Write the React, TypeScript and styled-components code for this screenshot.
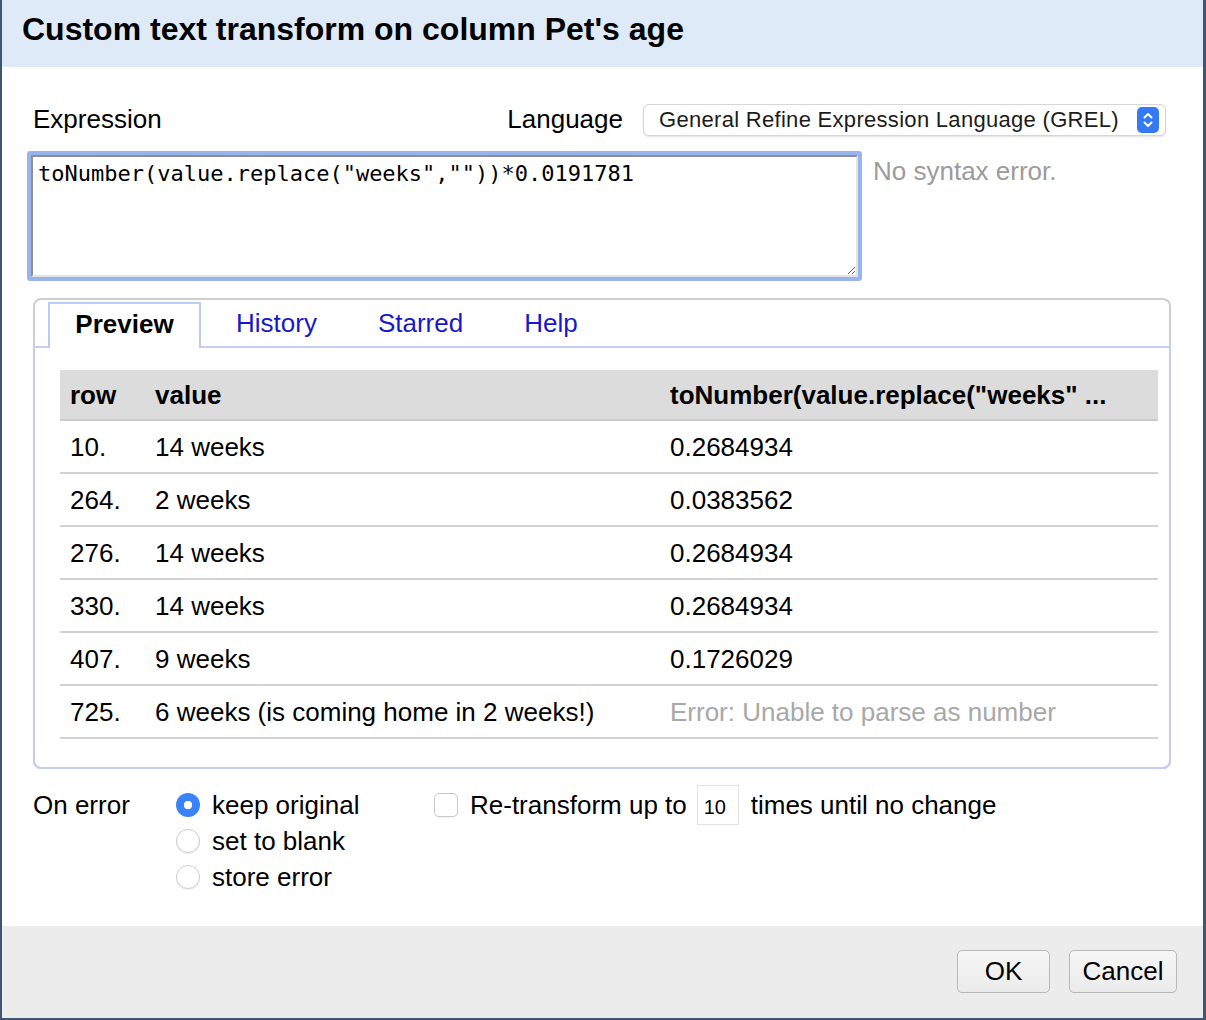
import React from 'react';
import styled, { createGlobalStyle, css } from 'styled-components';

const GlobalStyle = createGlobalStyle`
  html, body {
    margin: 0;
    padding: 0;
    background: #ffffff;
  }
  body {
    font-family: "Liberation Sans", Arial, Helvetica, sans-serif;
    color: #000;
  }
  * {
    box-sizing: border-box;
  }
`;

interface PreviewRow {
  row: string;
  value: string;
  result: string;
  error?: boolean;
}

const rows: PreviewRow[] = [
  { row: '10.', value: '14 weeks', result: '0.2684934' },
  { row: '264.', value: '2 weeks', result: '0.0383562' },
  { row: '276.', value: '14 weeks', result: '0.2684934' },
  { row: '330.', value: '14 weeks', result: '0.2684934' },
  { row: '407.', value: '9 weeks', result: '0.1726029' },
  { row: '725.', value: '6 weeks (is coming home in 2 weeks!)', result: 'Error: Unable to parse as number', error: true },
];

const tabs = ['Preview', 'History', 'Starred', 'Help'];

const onErrorOptions = ['keep original', 'set to blank', 'store error'];

const App = (): JSX.Element => {
  return (
    <>
      <GlobalStyle />
      <Dialog>
        <Header>
          <Title>Custom text transform on column Pet's age</Title>
        </Header>

        <Body>
          <TopRow>
            <Label $grow>Expression</Label>
            <Label $gap={20}>Language</Label>
            <SelectBox>
              <SelectText>General Refine Expression Language (GREL)</SelectText>
              <Stepper>
                <svg width="22" height="26" viewBox="0 0 22 26">
                  <rect x="0" y="0" width="22" height="26" rx="5" fill="#3479f6" />
                  <path d="M7.5 10.5 L11 7 L14.5 10.5" fill="none" stroke="#fff" strokeWidth="2" strokeLinecap="round" strokeLinejoin="round" />
                  <path d="M7.5 15.5 L11 19 L14.5 15.5" fill="none" stroke="#fff" strokeWidth="2" strokeLinecap="round" strokeLinejoin="round" />
                </svg>
              </Stepper>
            </SelectBox>
          </TopRow>

          <EditorRow>
            <ExpressionInput defaultValue={'toNumber(value.replace("weeks",""))*0.0191781'} spellCheck={false} />
            <Status>No syntax error.</Status>
          </EditorRow>

          <TabsPanel>
            <TabList>
              {tabs.map((tab, i) => (
                <Tab key={tab} $active={i === 0}>{tab}</Tab>
              ))}
            </TabList>
            <TabContent>
              <PreviewTable>
                <colgroup>
                  <col style={{ width: 85 }} />
                  <col style={{ width: 515 }} />
                  <col />
                </colgroup>
                <thead>
                  <tr>
                    <Th>row</Th>
                    <Th>value</Th>
                    <Th>toNumber(value.replace("weeks" ...</Th>
                  </tr>
                </thead>
                <tbody>
                  {rows.map((r) => (
                    <tr key={r.row}>
                      <Td>{r.row}</Td>
                      <Td>{r.value}</Td>
                      <Td $muted={r.error}>{r.result}</Td>
                    </tr>
                  ))}
                </tbody>
              </PreviewTable>
            </TabContent>
          </TabsPanel>

          <Options>
            <OptionLabel>On error</OptionLabel>
            <RadioGroup>
              {onErrorOptions.map((opt, i) => (
                <OptionLine key={opt}>
                  <Radio $checked={i === 0} />
                  {opt}
                </OptionLine>
              ))}
            </RadioGroup>
            <OptionLine>
              <Checkbox />
              Re-transform up to
              <Times>10</Times>
              times until no change
            </OptionLine>
          </Options>
        </Body>

        <Footer>
          <Button $width={93}>OK</Button>
          <Button $width={108}>Cancel</Button>
        </Footer>
      </Dialog>
    </>
  );
};

const Dialog = styled.div`
  width: 1206px;
  height: 1020px;
  display: flex;
  flex-direction: column;
  border-left: 2px solid #3f5573;
  border-right: 3px solid #3f5573;
  border-bottom: 2px solid #3f5573;
  background: #fff;
  overflow: hidden;
`;

const Header = styled.div`
  height: 67px;
  flex: 0 0 67px;
  background: #dfeaf9;
  padding: 10px 20px 0;
`;

const Title = styled.h1`
  margin: 0;
  font-size: 32px;
  line-height: 38px;
  font-weight: bold;
`;

const Body = styled.div`
  flex: 1;
  padding: 0 32px 0 31px;
`;

const TopRow = styled.div`
  display: flex;
  align-items: center;
  height: 32px;
  margin-top: 37px;
`;

const Label = styled.div<{ $grow?: boolean; $gap?: number }>`
  font-size: 26px;
  line-height: 30px;
  padding-bottom: 2px;
  ${(p) => p.$grow && css`flex: 1;`}
  margin-right: ${(p) => p.$gap ?? 0}px;
`;

const SelectBox = styled.div`
  width: 523px;
  height: 32px;
  margin-right: 5px;
  display: flex;
  align-items: center;
  justify-content: space-between;
  padding: 0 6px 0 15px;
  border: 1px solid #d6d6d6;
  border-radius: 6px;
  box-shadow: 0 1px 2px rgba(0, 0, 0, 0.12);
  background: #fff;
`;

const SelectText = styled.span`
  font-size: 22px;
  letter-spacing: 0.3px;
  color: #1c1c1c;
  white-space: nowrap;
`;

const Stepper = styled.span`
  display: flex;
  width: 22px;
  height: 26px;
`;

const EditorRow = styled.div`
  display: flex;
  align-items: flex-start;
  margin-top: 19px;
`;

const ExpressionInput = styled.textarea`
  width: 827px;
  height: 122px;
  margin: 0 0 0 -2px;
  padding: 4px 5px;
  border-style: solid;
  border-width: 2px;
  border-color: #8e8e8e #e3e3e3 #e3e3e3 #8e8e8e;
  border-radius: 1px;
  box-shadow: 0 0 0 4px #97b4ef;
  outline: none;
  font-family: "DejaVu Sans Mono", "Liberation Mono", monospace;
  font-size: 22px;
  line-height: 26px;
  color: #000;
  resize: both;
`;

const Status = styled.div`
  margin: 1px 0 0 15px;
  font-size: 26px;
  line-height: 30px;
  color: #9b9b9b;
`;

const TabsPanel = styled.div`
  width: 1138px;
  margin-top: 21px;
  border: 2px solid #cfcfcf;
  border-radius: 8px;
  padding-top: 2px;
`;

const TabList = styled.div`
  display: flex;
  padding-left: 13px;
  height: 44px;
`;

const Tab = styled.div<{ $active?: boolean }>`
  display: flex;
  align-items: center;
  font-size: 26px;
  padding-bottom: 4px;
  border: 2px solid transparent;
  border-bottom: none;
  ${(p) =>
    p.$active
      ? css`
          width: 153px;
          justify-content: center;
          font-weight: bold;
          color: #000;
          background: #fff;
          border-color: #bccbf1;
          height: 46px;
          position: relative;
          z-index: 1;
        `
      : css`
          margin-left: 2px;
          padding-left: 31px;
          padding-right: 24px;
          color: #1818c9;
        `}
`;

const TabContent = styled.div`
  margin: 0 -2px -2px;
  border: 2px solid #c3cef1;
  border-radius: 0 0 8px 8px;
  padding: 22px 11px 28px 25px;
`;

const PreviewTable = styled.table`
  width: 100%;
  border-collapse: collapse;
  table-layout: fixed;
  font-size: 26px;
`;

const Th = styled.th`
  height: 50px;
  padding: 2px 0 0 10px;
  text-align: left;
  font-weight: bold;
  background: #dcdcdc;
  border-bottom: 2px solid #cbcbcb;
  white-space: nowrap;
  overflow: hidden;
`;

const Td = styled.td<{ $muted?: boolean }>`
  height: 53px;
  padding: 2px 0 0 10px;
  border-bottom: 2px solid #d2d2d2;
  white-space: nowrap;
  color: ${(p) => (p.$muted ? '#a8a8a8' : '#000')};
`;

const Options = styled.div`
  display: flex;
  align-items: flex-start;
  margin-top: 18px;
  font-size: 26px;
`;

const OptionLabel = styled.div`
  width: 143px;
  line-height: 36px;
`;

const RadioGroup = styled.div`
  width: 258px;
  display: flex;
  flex-direction: column;
`;

const OptionLine = styled.div`
  display: flex;
  align-items: center;
  height: 36px;
  white-space: nowrap;
`;

const Radio = styled.span<{ $checked?: boolean }>`
  width: 24px;
  height: 24px;
  margin-right: 12px;
  border-radius: 50%;
  flex: 0 0 24px;
  ${(p) =>
    p.$checked
      ? css`
          background: radial-gradient(circle, #fff 0 4px, #3a82f7 4.5px);
        `
      : css`
          background: #fff;
          border: 1px solid #cdcdcd;
          box-shadow: 0 1px 1px rgba(0, 0, 0, 0.08);
        `}
`;

const Checkbox = styled.span`
  width: 24px;
  height: 24px;
  flex: 0 0 24px;
  margin-right: 12px;
  border: 1px solid #c9c9c9;
  border-radius: 5px;
  background: #fff;
  box-shadow: 0 1px 1px rgba(0, 0, 0, 0.06);
`;

const Times = styled.span`
  display: flex;
  align-items: center;
  width: 42px;
  height: 40px;
  margin: 0 12px 0 10px;
  padding: 4px 0 0 6px;
  border: 1px solid #e2e2e2;
  font-size: 20px;
`;

const Footer = styled.div`
  flex: 0 0 92px;
  height: 92px;
  background: #ececec;
  display: flex;
  justify-content: flex-end;
  align-items: flex-start;
  gap: 19px;
  padding: 24px 26px 0 0;
`;

const Button = styled.button<{ $width: number }>`
  width: ${(p) => p.$width}px;
  height: 43px;
  border: 1px solid #b8b8b8;
  border-radius: 5px;
  background: linear-gradient(#f6f6f6, #ebebeb);
  font-family: "Liberation Sans", Arial, sans-serif;
  font-size: 26px;
  color: #000;
  padding: 0;
`;

export default App;
